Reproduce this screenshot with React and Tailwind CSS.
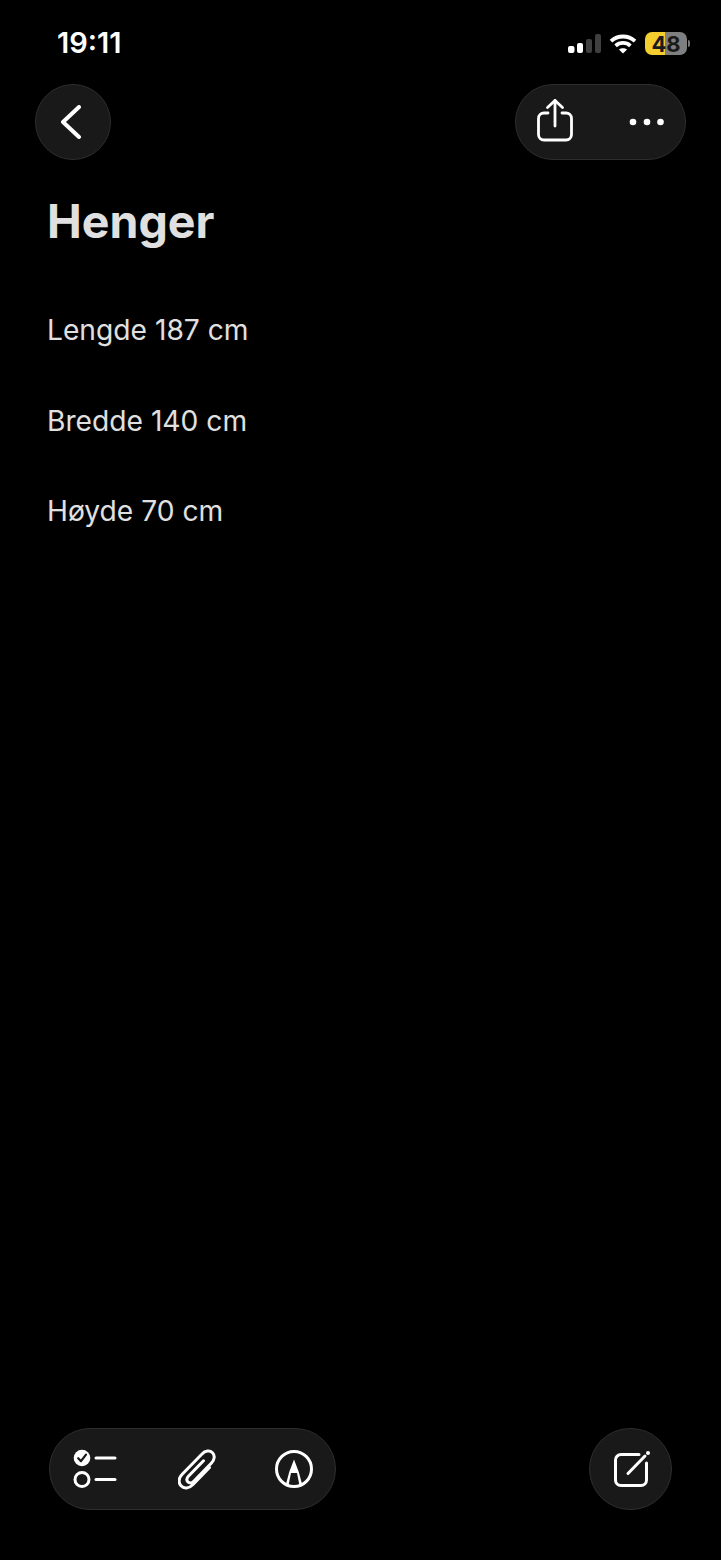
import React from 'react';

const fontStack = { fontFamily: 'Inter, "Liberation Sans", sans-serif' };

const SignalIcon = () => (
  <svg width="33" height="19" viewBox="0 0 33 19" fill="currentColor">
    <rect x="0" y="12" width="6.500" height="7" rx="2" />
    <rect x="9" y="9" width="6" height="10" rx="2" />
    <rect x="18" y="5" width="6" height="14" rx="2" fill="#3f3f3f" />
    <rect x="27" y="0" width="6" height="19" rx="2" fill="#3f3f3f" />
  </svg>
);

const WifiIcon = () => (
  <svg width="28" height="20" viewBox="0 0 28 20" fill="none" stroke="currentColor" strokeWidth="3.800">
    <path d="M2 7.200C8.800 .9 19.200 .9 26 7.200" />
    <path d="M6.600 11.800C10.900 8 17.100 8 21.400 11.800" />
    <path d="M14 19.500L9.900 15.600C12.300 13.700 15.700 13.700 18.100 15.600Z" fill="currentColor" stroke="none" />
  </svg>
);

const Battery = () => (
  <div className="flex items-center gap-[1px]">
    <div className="flex h-[23px] w-[42px] items-center justify-center rounded-[7px] bg-[linear-gradient(90deg,#f4cd2f_48%,#7f7f7f_48%)] text-[22px] font-bold leading-none text-[#1a1a1a]">
      48
    </div>
    <div className="h-[7px] w-[2px] rounded-r-sm bg-[#777777]" />
  </div>
);

const ChevronBack = () => (
  <svg width="24" height="34" viewBox="0 0 24 34" fill="none" stroke="currentColor" strokeWidth="4" strokeLinecap="round" strokeLinejoin="round">
    <path d="M20 2L4 17L20 32" />
  </svg>
);

const ShareIcon = () => (
  <svg className="mb-[4px]" width="36" height="44" viewBox="0 0 36 44" fill="none" stroke="currentColor" strokeWidth="2.800" strokeLinecap="round" strokeLinejoin="round">
    <path d="M11 15H7a5.500 5.500 0 0 0-5.500 5.500V36.500A5.500 5.500 0 0 0 7 42H29A5.500 5.500 0 0 0 34.500 36.500V20.500A5.500 5.500 0 0 0 29 15H25" />
    <path d="M18 28V2.500" />
    <path d="M10.500 9.500L18 2.500L25.500 9.500" />
  </svg>
);

const MoreIcon = () => (
  <svg width="36" height="8" viewBox="0 0 36 8" fill="currentColor">
    <circle cx="4" cy="4" r="3.300" />
    <circle cx="18" cy="4" r="3.300" />
    <circle cx="31.500" cy="4" r="3.300" />
  </svg>
);

const ChecklistIcon = () => (
  <svg width="46" height="40" viewBox="0 0 46 40" fill="none" stroke="currentColor" strokeWidth="3" strokeLinecap="round">
    <circle cx="9" cy="9" r="8.300" fill="currentColor" stroke="none" />
    <path d="M5.200 9.200L8 12.200L13 5.600" stroke="#191919" strokeWidth="2.200" strokeLinejoin="round" />
    <circle cx="9" cy="30.500" r="7" />
    <path d="M23 9H42" />
    <path d="M23 30.500H42" />
  </svg>
);

const PaperclipIcon = () => (
  <svg width="38" height="41" viewBox="0 0 38 41" fill="none" stroke="currentColor" strokeWidth="3" strokeLinecap="round" strokeLinejoin="round">
    <path d="M31.500 18.500L15 35.500C11 39.800 5.800 39.800 3 36.800C.2 33.800 .5 29 4.200 25.200L24 5C27.200 1.500 31.800 1 34.500 3.700C37.200 6.400 36.600 10.800 33.500 14L15.500 32.500C13.800 34.200 11.300 34.300 9.900 32.900C8.500 31.400 8.700 29.100 10.400 27.300L25.500 11.800" />
  </svg>
);

const MarkupIcon = () => (
  <svg width="40" height="40" viewBox="0 0 40 40" fill="none">
    <circle cx="20" cy="20" r="17.500" stroke="currentColor" strokeWidth="3" />
    <path d="M20 10.500L24.800 23L28 35H25.200L23 24H17L14.800 35H12L15.200 23Z" fill="currentColor" />
  </svg>
);

const ComposeIcon = () => (
  <svg width="38" height="38" viewBox="0 0 38 38" fill="none" stroke="currentColor" strokeLinecap="round">
    <path d="M26 4.500H8A5.500 5.500 0 0 0 2.500 10V30A5.500 5.500 0 0 0 8 35.500H28A5.500 5.500 0 0 0 33.500 30V13" strokeWidth="3" />
    <path d="M15 23.500L32 6" strokeWidth="3" />
    <circle cx="35" cy="3" r="2" fill="currentColor" stroke="none" />
  </svg>
);

const lines = ['Lengde 187 cm', 'Bredde 140 cm', 'Høyde 70 cm'];

export default function App() {
  return (
    <div className="flex h-[1560px] w-[721px] flex-col bg-black text-white" style={fontStack}>
      {/* Status bar */}
      <div className="flex h-[84px] items-start justify-between pl-[57px] pr-[31px] pt-[26px]">
        <span className="text-[29px] font-semibold leading-[34px]">19:11</span>
        <div className="flex items-center gap-[8px] pt-[6px]">
          <SignalIcon />
          <WifiIcon />
          <Battery />
        </div>
      </div>

      {/* Nav */}
      <div className="flex items-center justify-between pl-[35px] pr-[35px]">
        <button className="flex h-[76px] w-[76px] items-center justify-center rounded-full border border-[#2e2e2e] bg-[#191919] pr-[4px] text-white">
          <ChevronBack />
        </button>
        <div className="flex h-[76px] w-[171px] items-center gap-[56px] rounded-full border border-[#2e2e2e] bg-[#191919] pl-[21px]">
          <ShareIcon />
          <MoreIcon />
        </div>
      </div>

      {/* Note */}
      <div className="flex-1 px-[47px] pt-[33px]">
        <h1 className="text-[46.500px] font-bold leading-[56px] text-[#e0e0e0]">Henger</h1>
        <div className="mt-[64px] flex flex-col gap-[56.500px]">
          {lines.map((line) => (
            <p key={line} className="text-[28.200px] font-normal leading-[34px] text-[#e0e0e0]">{line}</p>
          ))}
        </div>
      </div>

      {/* Bottom toolbar */}
      <div className="flex items-center justify-between pb-[50px] pl-[49px] pr-[49px]">
        <div className="flex h-[82px] w-[287px] items-center justify-between rounded-full border border-[#2e2e2e] bg-[#191919] pl-[23px] pr-[21px]">
          <ChecklistIcon />
          <PaperclipIcon />
          <MarkupIcon />
        </div>
        <div className="flex h-[82px] w-[83px] items-center justify-center rounded-full border border-[#2e2e2e] bg-[#191919] pl-[2px]">
          <ComposeIcon />
        </div>
      </div>
    </div>
  );
}
